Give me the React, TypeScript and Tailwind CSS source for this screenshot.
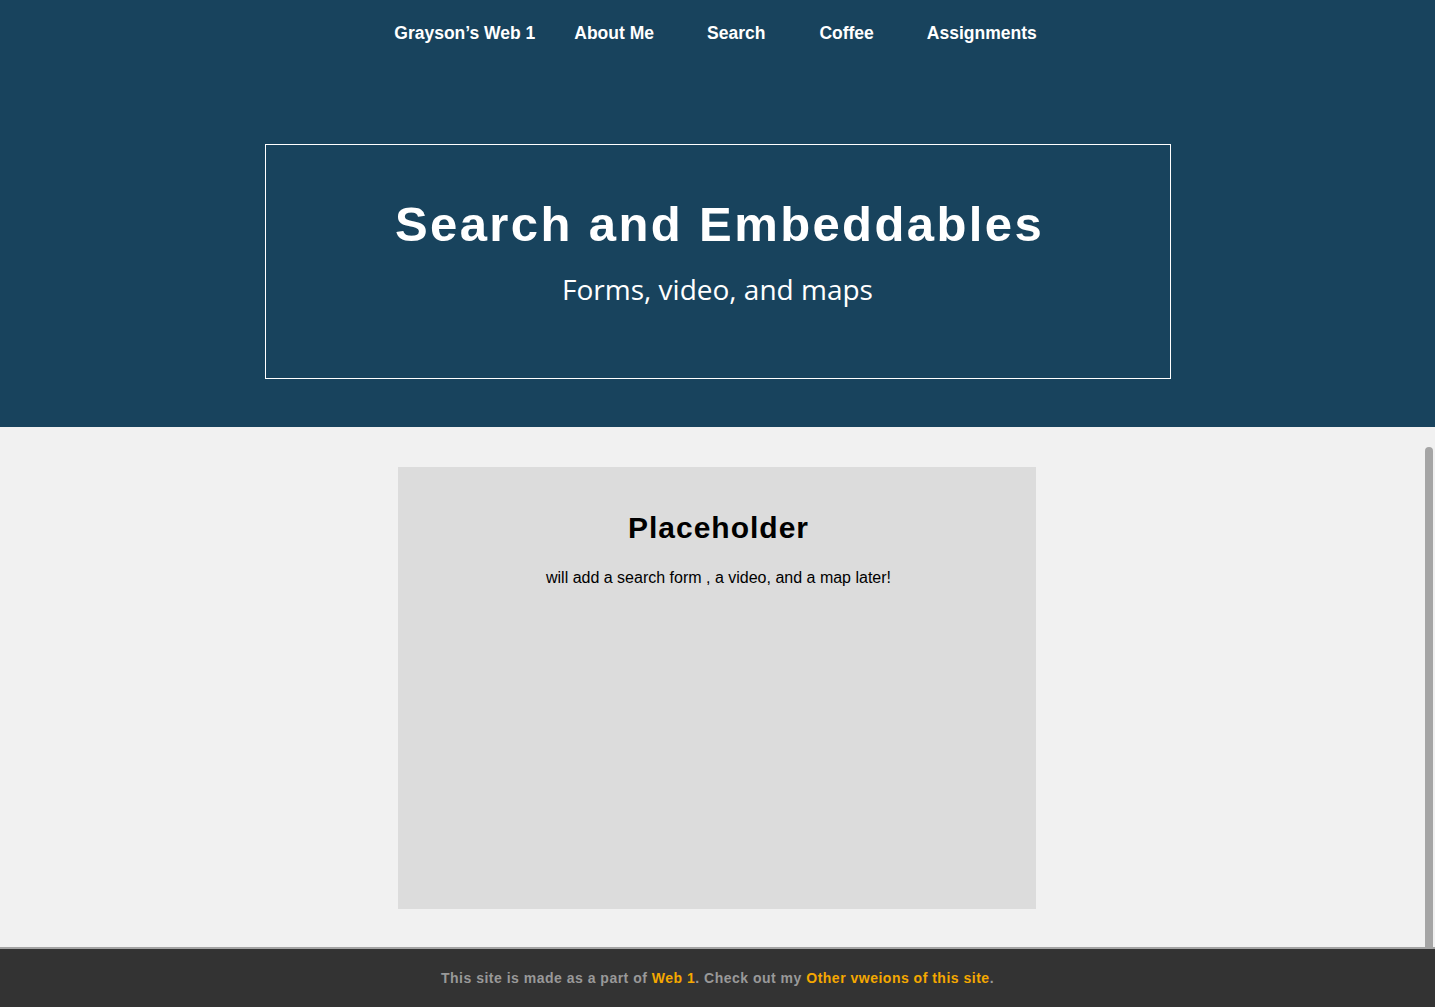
import React from "react";

const navItems = ["Grayson’s Web 1", "About Me", "Search", "Coffee", "Assignments"];

const App = () => {
  return (
    <div className="flex min-h-[1007px] flex-col font-['Liberation_Sans',Arial,sans-serif]">
      <header className="h-[427px] bg-[#18435d] text-white">
        <nav className="flex justify-center pt-[21px] pr-[4px] text-[17.5px] font-bold leading-[24px]">
          <a className="mr-[39px]">{navItems[0]}</a>
          <a className="mr-[53px]">{navItems[1]}</a>
          <a className="mr-[54px]">{navItems[2]}</a>
          <a className="mr-[53px]">{navItems[3]}</a>
          <a>{navItems[4]}</a>
        </nav>

        <div className="mx-auto mt-[99px] flex h-[235px] w-[906px] flex-col items-center border border-white pt-[50px]">
          <h1 className="pl-[4px] text-[49px] font-bold leading-[58px] tracking-[2.4px]">
            Search and Embeddables
          </h1>
          <p className="mt-[17px] font-['Open_Sans',sans-serif] text-[28px] leading-[38px]">
            Forms, video, and maps
          </p>
        </div>
      </header>

      <main className="relative flex-1 bg-[#f1f1f1] pt-[40px] pb-[38px] pr-[2px]">
        <section className="mx-auto flex h-[442px] w-[638px] flex-col items-center bg-[#dcdcdc] pt-[43px] pl-[4px]">
          <h2 className="text-[30px] font-bold leading-[36px] tracking-[1px] text-black">Placeholder</h2>
          <p className="mt-[22px] text-[16px] leading-[20px] text-black">
            will add a search form , a video, and a map later!
          </p>
        </section>
        <div className="absolute right-[2px] top-[20px] bottom-0 w-[8px] rounded-t-full bg-[#a5a5a5]" />
      </main>

      <footer className="h-[60px] border-t-2 border-[#a3a3a3] bg-[#333333] pt-[20px] text-center text-[14px] font-bold leading-[18px] tracking-[0.5px] text-[#999999]">
        This site is made as a part of <a className="text-[#f5a800]">Web 1</a>. Check out my{" "}
        <a className="text-[#f5a800]">Other vweions of this site</a>.
      </footer>
    </div>
  );
};

export default App;
